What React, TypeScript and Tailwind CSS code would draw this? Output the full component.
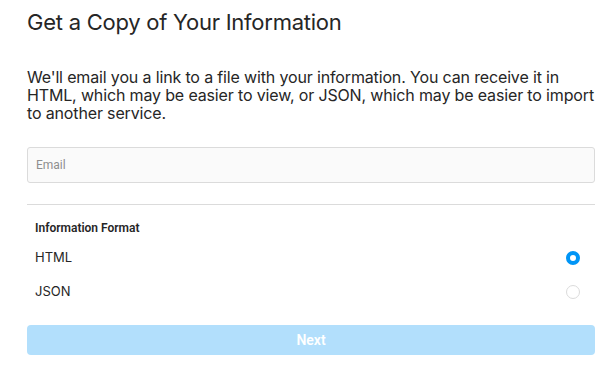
import { useState } from 'react';

const formats = ['HTML', 'JSON'];

const Radio = ({ checked }: { checked: boolean }) =>
  checked ? (
    <span className="box-border block h-[14px] w-[14px] rounded-full border-[4px] border-[#0095f6] bg-white" />
  ) : (
    <span className="box-border block h-[14px] w-[14px] rounded-full border-[1.5px] border-[#dbdbdb] bg-white" />
  );

export default function App() {
  const [format, setFormat] = useState('HTML');

  return (
    <div className="min-h-screen bg-white pl-[27px] pr-[19px] pt-2 font-['Inter',sans-serif] text-[#262626]">
      <h1 className="text-[22px] leading-[28px] font-normal tracking-[-0.25px]">Get a Copy of Your Information</h1>

      <p className="mt-8 whitespace-nowrap text-[16px] leading-[18px] tracking-[-0.15px]">
        We'll email you a link to a file with your information. You can receive it in
        <br />
        HTML, which may be easier to view, or JSON, which may be easier to import
        <br />
        to another service.
      </p>

      <input
        type="email"
        placeholder="Email"
        className="mt-[25px] block h-[36px] w-full rounded-[3px] border border-[#dbdbdb] bg-[#fafafa] px-2 font-['Roboto',sans-serif] text-[12px] outline-none placeholder:text-[#8e8e8e]"
      />

      <div className="mt-[21px] h-px bg-[#dbdbdb]" />

      <div className="mt-[15px] pl-2 font-['Roboto',sans-serif] text-[12px] leading-4 font-semibold text-[#262626]">
        Information Format
      </div>

      <div className="mt-[5px]">
        {formats.map((f) => (
          <label
            key={f}
            onClick={() => setFormat(f)}
            className="flex h-[34px] cursor-pointer items-center justify-between pl-2 pr-[15px] text-[13px]"
          >
            <span>{f}</span>
            <Radio checked={format === f} />
          </label>
        ))}
      </div>

      <button
        disabled
        className="mt-4 block h-[30px] w-full rounded-[4px] bg-[#b2dffc] font-['Roboto',sans-serif] text-[14px] font-semibold text-white"
      >
        Next
      </button>
    </div>
  );
}
